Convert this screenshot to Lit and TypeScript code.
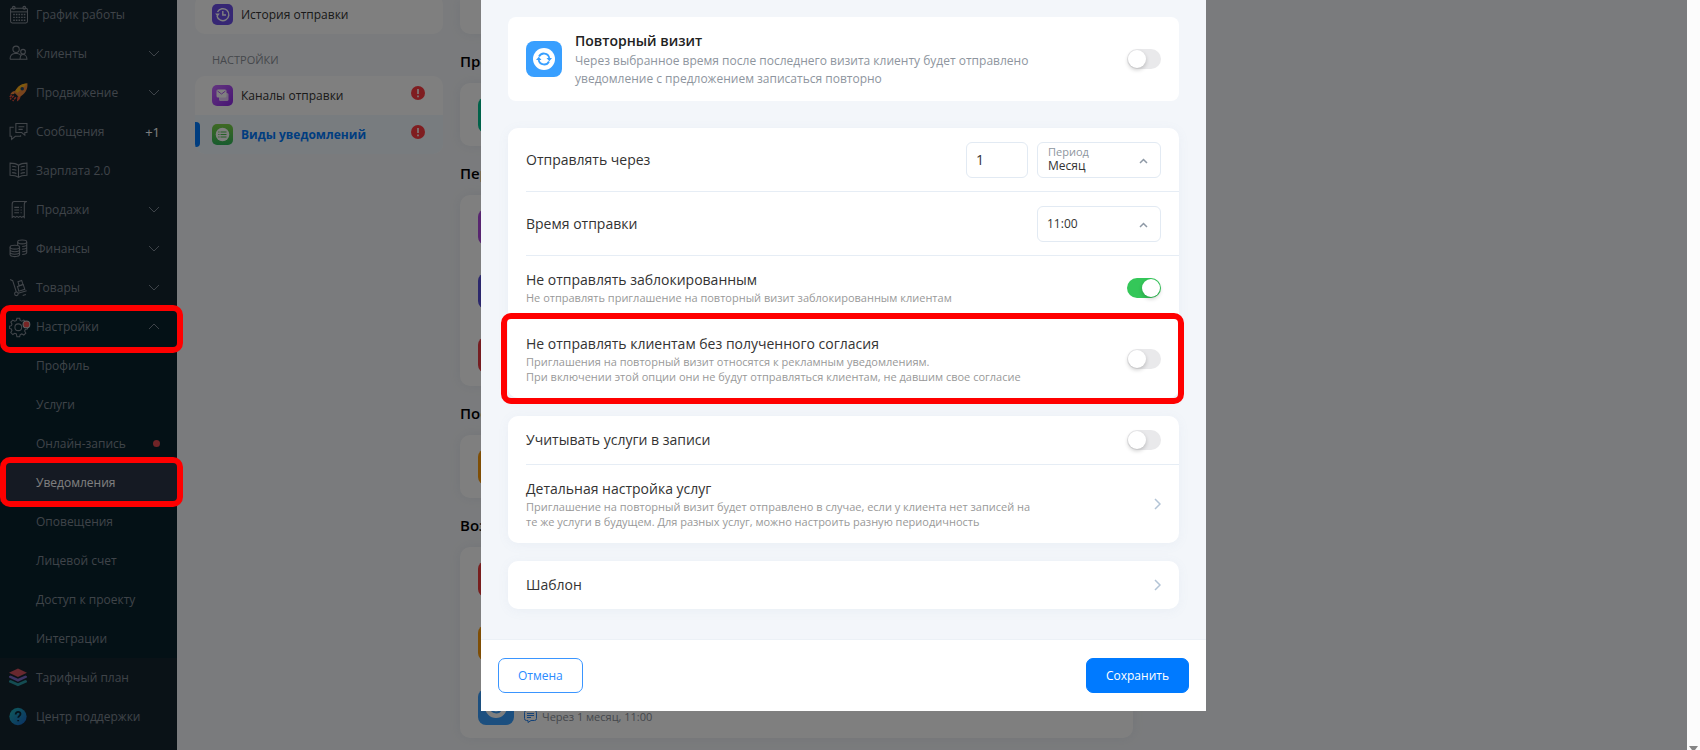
import { LitElement, html, svg, css, nothing } from "lit";
import { customElement, property } from "lit/decorators.js";
import { classMap } from "lit/directives/class-map.js";

interface NavItem {
  label: string;
  icon?: string;
  chevron?: "down" | "up";
  count?: string;
  dot?: boolean;
  sub?: boolean;
  active?: boolean;
  framed?: boolean;
}

const NAV: NavItem[] = [
  { label: "График работы", icon: "calendar" },
  { label: "Клиенты", icon: "clients", chevron: "down" },
  { label: "Продвижение", icon: "rocket", chevron: "down" },
  { label: "Сообщения", icon: "messages", count: "+1" },
  { label: "Зарплата 2.0", icon: "book" },
  { label: "Продажи", icon: "receipt", chevron: "down" },
  { label: "Финансы", icon: "coins", chevron: "down" },
  { label: "Товары", icon: "cart", chevron: "down" },
  { label: "Настройки", icon: "gear", chevron: "up", framed: true },
  { label: "Профиль", sub: true },
  { label: "Услуги", sub: true },
  { label: "Онлайн-запись", sub: true, dot: true },
  { label: "Уведомления", sub: true, active: true, framed: true },
  { label: "Оповещения", sub: true },
  { label: "Лицевой счет", sub: true },
  { label: "Доступ к проекту", sub: true },
  { label: "Интеграции", sub: true },
  { label: "Тарифный план", icon: "layers" },
  { label: "Центр поддержки", icon: "help" },
];

const SECTIONS = [
  { title: "Прочие", colors: ["#00c493"] },
  { title: "Перед визитом", colors: ["#b04be0", "#564fd8", "#ec3b43"] },
  { title: "После визита", colors: ["#ff9d0a"] },
  { title: "Возвращение", colors: ["#f03c3c", "#ff9d0a", "#389fff"] },
];

const ICONS: Record<string, unknown> = {
  calendar: svg`
    <rect x="1.5" y="3" width="16" height="14" rx="1.500"/>
    <path d="M1.500 6.500h16"/>
    <circle cx="4.500" cy="2.600" r="1.300"/><circle cx="14.500" cy="2.600" r="1.300"/>
    <path stroke-width="1.300" stroke-dasharray="1.500 1" d="M4 9h11.500M4 11.700h11.500M4 14.400h11.500"/>`,
  clients: svg`
    <circle cx="6.700" cy="5" r="3"/>
    <path d="M1 14.500c0-3.500 2-5.300 4.500-5.500h2.500c1.500.2 2.500.8 3.200 1.800M1 14.500h9.500"/>
    <circle cx="13.300" cy="7.300" r="2.200"/>
    <path d="M10.500 14.500c0-2.600 1-4.500 2.800-4.500s3.700 1.700 3.700 4.500z"/>`,
  messages: svg`
    <path d="M6.500 1.500h10.500v8.500h-2v2.500L12 10H6.500z"/>
    <path d="M4.500 5H1v8.500h1.500v3L6 13.500h5v-1M9 4.500h5.500M9 7h4"/>`,
  book: svg`
    <path d="M9 4C7 2.500 4 2 1 2v11.500c3 0 6 .5 8 2 2-1.500 5-2 8-2V2c-3 0-6 .5-8 2zM9 4v11.500"/>
    <path d="M3 5c1.500 0 3 .3 4 .8M3 8c1.500 0 3 .3 4 .8M3 11c1.500 0 3 .3 4 .8M15 5c-1.500 0-3 .3-4 .8M15 8c-1.500 0-3 .3-4 .8M15 11c-1.500 0-3 .3-4 .8"/>`,
  receipt: svg`
    <path d="M16.500 1.500H5C3.500 1.500 3 2.500 3 4v12.500l1.500-1 1.500 1 1.500-1 1.500 1 1.500-1 1.500 1 1.500-1 1 1V4c0-1.500.3-2.500 2.500-2.500z"/>
    <path d="M5 7h4.500M5 9.500h4.500M5 12h4.500M11 7h1M11 9.500h1M11 12h1"/>`,
  coins: svg`
    <ellipse cx="12.500" cy="2.800" rx="4.300" ry="1.800"/>
    <path d="M8.200 2.800v3M16.800 2.800v10c0 1-1.800 1.800-4.300 1.800M16.800 5.300c0 1-1.800 1.800-4.300 1.800M16.800 7.800c0 1-1.800 1.800-4.300 1.800M16.800 10.300c0 1-1.800 1.800-4.300 1.800"/>
    <ellipse cx="5.500" cy="7.800" rx="4.500" ry="1.800"/>
    <path d="M1 7.800v7c0 1 2 1.900 4.500 1.900s4.500-.9 4.500-1.900v-7M1 10.200c0 1 2 1.800 4.500 1.800s4.500-.8 4.500-1.800M1 12.600c0 1 2 1.800 4.500 1.800s4.500-.8 4.500-1.800"/>`,
  cart: svg`
    <path d="M1 1.500l2.500 1L7 13.500"/>
    <circle cx="7" cy="15" r="1.700"/>
    <path d="M8.700 14.500l8-2.500M13 16.500l3-.8"/>
    <path d="M8 8l5.500-1.800 1.500 4.500-5.700 1.800z"/>
    <path d="M8.500 3.500l3.500-1.200 1.200 3.800-3.600 1.200z"/>`,
  gear: svg`
    <path d="M7.500 1.200h2.600l.5 2.100 1.500.7 1.900-1.100 1.900 1.900-1.100 1.900.6 1.500 2.100.5v2.600l-2.100.5-.6 1.500 1.100 1.900-1.900 1.900-1.900-1.100-1.500.6-.5 2.100H7.500L7 16.100l-1.500-.6-1.900 1.100-1.900-1.900 1.100-1.900-.6-1.500L.500 10.800V8.700l1.700-.5.600-1.500-1.100-1.900 1.900-1.900L5.500 4 7 3.300z"/>
    <circle cx="8.800" cy="9.700" r="3.200"/>
    <circle cx="16.500" cy="7" r="3.200" fill="#f04a4a" stroke="#c8c8c8"/>`,
  rocket: svg`
    <g stroke="none">
      <path fill="#ff8a3c" d="M6 7.500C3.500 7.500 2 9 1 11l4-.6z"/>
      <path fill="#f0573c" d="M11 12c0 2.500-1.500 4.500-3.500 5.500L8 13z"/>
      <path fill="#f0883a" d="M17.500.5C12 .5 8 3 5 9l4.500 4.500C15.500 10.500 17.800 6 17.500.5z"/>
      <path fill="#ffb41a" d="M17.500.5C12 .5 8.500 3 6 7.500l2 2z"/>
      <circle cx="12.500" cy="5.500" r="1.700" fill="#24466a"/>
    </g>
    <path stroke="#e8503c" stroke-width="1.400" stroke-dasharray="2.500 .8" d="M4.500 12L1 15.500M6.500 13.500L3.500 17M2.500 11.500L.5 13.500"/>`,
  layers: svg`
    <g stroke="none">
      <path fill="#d0505f" d="M8.500.5L17 4.500l-8.500 4L0 4.500z"/>
      <path fill="#7a68c8" d="M0 7.700l1.500-.7 7 3.200 7-3.200 1.500.7v1.400L8.500 13 0 9.100z"/>
      <path fill="#2898a4" d="M0 12l1.500-.7 7 3.200 7-3.200 1.500.7v1.400l-8.500 4-8.500-4z"/>
    </g>`,
  help: svg`
    <defs><linearGradient id="hg" x1="0" y1="0" x2="1" y2="1"><stop offset="0" stop-color="#20b8b8"/><stop offset="1" stop-color="#1660c8"/></linearGradient></defs>
    <circle cx="8.500" cy="9" r="8.200" fill="url(#hg)" stroke="none"/>
    <path stroke="#0b2434" stroke-width="1.700" d="M6.300 7c0-1.500 1-2.300 2.300-2.300s2.300.8 2.300 2c0 1.700-2.200 1.800-2.200 3.600M8.700 12.200v1.300"/>`,
};

const chevronPath = (dir: string) => (dir === "up" ? "M1 6l5-5 5 5" : "M1 1l5 5 5-5");

const refreshGlyph = svg`
  <circle cx="18" cy="18" r="11" fill="#fff"/>
  <path d="M13 15.500a5.500 5.500 0 0 1 10.300 1.500M23 20.500a5.500 5.500 0 0 1-10.300-1.500" fill="none" stroke="#389fff" stroke-width="1.800"/>
  <path d="M20.500 17h5.500l-2.700 3.300zM10 19h5.500l-2.700-3.300z" fill="#389fff"/>`;

@customElement("side-nav")
export class SideNav extends LitElement {
  static styles = css`
    :host { display: block; background: #15242f; }
    .list { list-style: none; margin: -5px 0 0; padding: 0; }
    .item { position: relative; }
    .link {
      display: flex; align-items: center; height: 39px; box-sizing: border-box;
      padding: 0 17px 0 9px; gap: 8px; color: #7f8892; text-decoration: none; font-size: 12px;
    }
    .slot { width: 19px; height: 19px; flex: none; }
    .icon { display: block; width: 19px; height: 19px; overflow: visible; fill: none; stroke: #848c95; stroke-width: 1; }
    .label { flex: 1; white-space: nowrap; }
    .deep { background: #09222d; }
    .active { background: #2a3446; }
    .active .link { color: #fff; }
    .chev { width: 12px; height: 7px; fill: none; stroke: #7d8792; stroke-width: 1; }
    .count { color: #fff; font-size: 13px; }
    .dot { width: 7px; height: 7px; border-radius: 50%; background: #e0484e; }
    .frame {
      position: absolute; inset: -2px -6px -7px 0; z-index: 5; pointer-events: none;
      border: 6px solid #f00; border-radius: 10px;
    }
    .active .frame { top: -6px; bottom: -5px; }
  `;
  render() {
    return html`<nav aria-label="Главное меню"><ul class="list">
      ${NAV.map((n) => html`
        <li class=${classMap({ item: true, deep: !!n.sub || n.chevron === "up", active: !!n.active })}>
          <a class="link" href="#">
            <span class="slot">${n.icon ? html`<svg class="icon" viewBox="0 0 18 18" aria-hidden="true">${ICONS[n.icon]}</svg>` : nothing}</span>
            <span class="label">${n.label}</span>
            ${n.count ? html`<span class="count">${n.count}</span>` : nothing}
            ${n.dot ? html`<span class="dot"></span>` : nothing}
            ${n.chevron ? html`<svg class="chev" viewBox="0 0 12 7" aria-hidden="true"><path d=${chevronPath(n.chevron)}/></svg>` : nothing}
          </a>
          ${n.framed ? html`<div class="frame"></div>` : nothing}
        </li>`)}
    </ul></nav>`;
  }
}

@customElement("settings-menu")
export class SettingsMenu extends LitElement {
  static styles = css`
    :host { display: block; font-size: 12px; color: #333; }
    .card { background: #fff; border-radius: 10px; overflow: hidden; }
    .first { margin-top: -5px; }
    .heading { margin: 0; padding: 10px 17px 0; font-size: 11px; font-weight: 400; line-height: 32px; color: #8a9099; }
    .link {
      position: relative; display: flex; align-items: center; gap: 8px; height: 39px;
      padding: 0 18px 0 17px; color: inherit; text-decoration: none;
    }
    .label { flex: 1; white-space: nowrap; }
    .icon { width: 21px; height: 21px; flex: none; }
    .alert { width: 14px; height: 14px; margin-bottom: 5px; }
    .current { background: #f0f8ff; color: #007aff; font-weight: 700; }
    .current::before {
      content: ""; position: absolute; left: 0; top: 7px; width: 5px; height: 25px;
      background: #007aff; border-radius: 0 4px 4px 0;
    }
  `;
  private alert() {
    return html`<svg class="alert" viewBox="0 0 14 14" role="img" aria-label="Внимание">
      <circle cx="7" cy="7" r="7" fill="#ff3b41"/><path d="M7 3v5M7 9.500v1.700" stroke="#fff" stroke-width="1.600"/></svg>`;
  }
  render() {
    return html`
      <div class="card first">
        <a class="link" href="#">
          <svg class="icon" viewBox="0 0 21 21" aria-hidden="true"><rect width="21" height="21" rx="5" fill="#6c4fe8"/>
            <path d="M5 12a6 6 0 1 0 .5-4M10.800 7v4h3.200" fill="none" stroke="#fff" stroke-width="1.400"/><path d="M3.200 9.500h4.600l-2.300 3.200z" fill="#fff"/></svg>
          <span class="label">История отправки</span>
        </a>
      </div>
      <h2 class="heading">НАСТРОЙКИ</h2>
      <div class="card">
        <a class="link" href="#">
          <svg class="icon" viewBox="0 0 21 21" aria-hidden="true">
            <defs><linearGradient id="pg" x1="0" y1="0" x2="1" y2="1"><stop offset="0" stop-color="#c66bff"/><stop offset="1" stop-color="#8e28e8"/></linearGradient></defs>
            <rect width="21" height="21" rx="5" fill="url(#pg)"/>
            <rect x="7" y="8" width="9.500" height="8" rx="1.500" fill="#fff" opacity=".75"/>
            <rect x="4.500" y="4.500" width="10" height="8" rx="1.500" fill="#fff"/><path d="M5.500 6l4 3 4-3" fill="none" stroke="#b45af5"/></svg>
          <span class="label">Каналы отправки</span>${this.alert()}
        </a>
        <a class="link current" href="#" aria-current="page">
          <svg class="icon" viewBox="0 0 21 21" aria-hidden="true">
            <defs><linearGradient id="gg" x1="0" y1="0" x2="0" y2="1"><stop offset="0" stop-color="#7ed348"/><stop offset="1" stop-color="#30b85c"/></linearGradient></defs>
            <rect width="21" height="21" rx="5" fill="url(#gg)"/><circle cx="10.500" cy="10.500" r="6.800" fill="#fff"/>
            <path d="M8.500 8h6M8.500 10.500h6M8.500 13h6M6.300 8h1.200M6.300 10.500h1.200M6.300 13h1.200" stroke="#4cc050" stroke-width="1.200"/></svg>
          <span class="label">Виды уведомлений</span>${this.alert()}
        </a>
      </div>`;
  }
}

@customElement("notice-list")
export class NoticeList extends LitElement {
  static styles = css`
    :host { display: block; }
    .card { background: #fff; border-radius: 10px; box-shadow: 0 0 12px rgba(120, 140, 170, .12); }
    .top { height: 34px; border-radius: 0 0 10px 10px; }
    .heading { margin: 0; font-size: 15px; font-weight: 600; color: #000; height: 49px; line-height: 54px; }
    .row { height: 63px; display: flex; align-items: center; gap: 10px; padding: 0 18px; }
    .row + .row { border-top: 1px solid #fff; }
    .tile { width: 36px; height: 36px; flex: none; }
    .info { display: flex; align-items: center; gap: 5px; margin-top: 20px; font-size: 11px; color: #8a9099; }
    .note { width: 13px; height: 13px; fill: none; stroke: #2a86f0; }
  `;
  render() {
    return html`<div class="card top"></div>
      ${SECTIONS.map((s, si) => html`
        <h2 class="heading">${s.title}</h2>
        <div class="card">
          ${s.colors.map((c, i) => html`<div class="row">
            <svg class="tile" viewBox="0 0 36 36" aria-hidden="true"><rect width="36" height="36" rx="8" fill=${c}/>${refreshGlyph}</svg>
            ${si === 3 && i === 2 ? html`<div class="info">
              <svg class="note" viewBox="0 0 13 13" aria-hidden="true"><path d="M2.500.5h8a2 2 0 0 1 2 2v6a2 2 0 0 1-2 2H7L4 12.500v-2H2.500a2 2 0 0 1-2-2v-6a2 2 0 0 1 2-2zM3 3.500h7M3 5.500h7M3 7.500h4"/></svg>
              <span>Через 1 месяц, 11:00</span></div>` : nothing}
          </div>`)}
        </div>`)}`;
  }
}

@customElement("toggle-switch")
export class ToggleSwitch extends LitElement {
  @property({ type: Boolean }) on = false;
  @property() name = "";
  static styles = css`
    :host { display: block; flex: none; }
    .box {
      appearance: none; display: block; box-sizing: border-box; margin: 0; width: 34px; height: 20px;
      border-radius: 10px; background: #e9e9eb; padding: 1px; cursor: pointer;
    }
    .box::before {
      content: ""; display: block; width: 18px; height: 18px; border-radius: 50%;
      background: #fff; box-shadow: 0 2px 4px rgba(0, 0, 0, .2);
    }
    .box:checked { background: #34c759; }
    .box:checked::before { margin-left: 14px; }
  `;
  render() {
    return html`<input class="box" type="checkbox" role="switch" aria-label=${this.name} .checked=${this.on}>`;
  }
}

@customElement("visit-dialog")
export class VisitDialog extends LitElement {
  static styles = css`
    :host { display: block; width: 100%; max-width: 725px; color: #333; }
    .dialog { background: #fff; }
    .body { background: #f3f6fa; padding: 17px 27px 30px; display: flex; flex-direction: column; gap: 18px; border-bottom: 1px solid #ecf1f6; }
    .card { background: #fff; border-radius: 10px; box-shadow: 0 2px 12px rgba(110, 140, 180, .07); }
    .intro { display: flex; align-items: center; gap: 13px; padding: 13px 18px; margin-bottom: 9px; border-radius: 8px; box-shadow: none; }
    .tile { width: 36px; height: 36px; flex: none; }
    .grow { flex: 1; min-width: 0; }
    .title { margin: 0; font-size: 14px; line-height: 22px; font-weight: 600; color: #222; }
    .desc { margin: 0; font-size: 12px; line-height: 18px; color: #8e959e; max-width: 480px; }
    .row {
      display: flex; align-items: center; gap: 9px; min-height: 48px;
      margin-left: 18px; padding: 0 18px 0 0; border-bottom: 1px solid #e6edf5; position: relative;
    }
    .row:last-child { border-bottom: 0; }
    .tall { min-height: 63px; }
    .flush { border-bottom-color: #fff; }
    .text { flex: 1; padding: 14px 0; }
    .name { display: block; font-size: 14px; line-height: 20px; }
    .hint { display: block; font-size: 11px; line-height: 15px; color: #999; }
    .link {
      box-sizing: border-box; width: calc(100% - 18px); background: none; border: 0; font: inherit; color: inherit;
      text-align: left; cursor: pointer;
    }
    .field { position: relative; width: 124px; }
    .caption { position: absolute; left: 11px; top: 2px; font-size: 11px; line-height: 15px; color: #8e959e; }
    .input {
      appearance: none; display: block; box-sizing: border-box; height: 36px; width: 62px; margin: 0; padding: 0 9px;
      border: 1px solid #e2eaf3; border-radius: 6px; background: #fff; font: inherit; font-size: 14px; color: #333; outline: 0;
    }
    .select { width: 100%; font-size: 12px; }
    .captioned { padding: 13px 10px 0; line-height: 18px; }
    .arrow { position: absolute; right: 13px; top: 16px; width: 9px; height: 6px; fill: none; stroke: #8e99a6; stroke-width: 1.500; pointer-events: none; }
    .go { width: 7px; height: 12px; flex: none; fill: none; stroke: #b3c4d6; stroke-width: 1.500; }
    .frame { position: absolute; inset: -7px -5px -6px -25px; border: 6px solid #f00; border-radius: 10px; pointer-events: none; z-index: 2; }
    .footer { display: flex; justify-content: space-between; padding: 18px 17px; }
    .btn { height: 35px; padding: 0 19px; border-radius: 7px; border: 1px solid #3a95ff; background: #fff; color: #2a8bff; font: inherit; font-size: 12px; cursor: pointer; }
    .primary { background: #007aff; border-color: #007aff; color: #fff; }
  `;
  private go() {
    return html`<svg class="go" viewBox="0 0 7 12" aria-hidden="true"><path d="M1 1l5 5-5 5"/></svg>`;
  }
  private arrow() {
    return html`<svg class="arrow" viewBox="0 0 9 6" aria-hidden="true"><path d="M1 5l3.500-3.500L8 5"/></svg>`;
  }
  render() {
    return html`<div class="dialog" role="dialog" aria-label="Повторный визит">
      <div class="body">
        <section class="card intro">
          <svg class="tile" viewBox="0 0 36 36" aria-hidden="true"><rect width="36" height="36" rx="8" fill="#389fff"/>${refreshGlyph}</svg>
          <div class="grow">
            <h1 class="title">Повторный визит</h1>
            <p class="desc">Через выбранное время после последнего визита клиенту будет отправлено уведомление с предложением записаться повторно</p>
          </div>
          <toggle-switch name="Повторный визит"></toggle-switch>
        </section>
        <section class="card">
          <div class="row tall">
            <label class="text name" for="amount">Отправлять через</label>
            <input class="input" id="amount" type="text" inputmode="numeric" value="1">
            <div class="field">
              <label class="caption" for="period">Период</label>
              <select class="input select captioned" id="period"><option>Месяц</option><option>Неделя</option></select>
              ${this.arrow()}
            </div>
          </div>
          <div class="row tall">
            <label class="text name" for="time">Время отправки</label>
            <div class="field">
              <select class="input select" id="time"><option>11:00</option><option>12:00</option></select>
              ${this.arrow()}
            </div>
          </div>
          <div class="row tall flush">
            <div class="text"><span class="name">Не отправлять заблокированным</span>
              <span class="hint">Не отправлять приглашение на повторный визит заблокированным клиентам</span></div>
            <toggle-switch on name="Не отправлять заблокированным"></toggle-switch>
          </div>
          <div class="row tall">
            <div class="text"><span class="name">Не отправлять клиентам без полученного согласия</span>
              <span class="hint">Приглашения на повторный визит относятся к рекламным уведомлениям.<br>При включении этой опции они не будут отправляться клиентам, не давшим свое согласие</span></div>
            <toggle-switch name="Не отправлять клиентам без полученного согласия"></toggle-switch>
            <div class="frame"></div>
          </div>
        </section>
        <section class="card">
          <div class="row">
            <span class="text name">Учитывать услуги в записи</span>
            <toggle-switch name="Учитывать услуги в записи"></toggle-switch>
          </div>
          <button class="row link" type="button">
            <span class="text"><span class="name">Детальная настройка услуг</span>
              <span class="hint">Приглашение на повторный визит будет отправлено в случае, если у клиента нет записей на<br>те же услуги в будущем. Для разных услуг, можно настроить разную периодичность</span></span>
            ${this.go()}
          </button>
        </section>
        <section class="card">
          <button class="row link" type="button"><span class="text name">Шаблон</span>${this.go()}</button>
        </section>
      </div>
      <footer class="footer">
        <button class="btn" type="button">Отмена</button>
        <button class="btn primary" type="button">Сохранить</button>
      </footer>
    </div>`;
  }
}

@customElement("app-root")
export class AppRoot extends LitElement {
  static styles = css`
    :host { display: flex; height: 100vh; overflow: hidden; font-family: "Open Sans", "Noto Sans", sans-serif; }
    .app { position: relative; flex: 1; min-width: 0; overflow: hidden; display: grid; grid-template-columns: 177px 1fr; background: #f5f7fa; }
    .main { display: grid; grid-template-columns: 248px minmax(0, 673px); gap: 17px; padding-left: 18px; align-items: start; }
    .overlay { position: absolute; inset: 0; z-index: 1; background: rgba(0, 0, 0, .5); display: flex; justify-content: center; align-items: flex-start; }
    .track { width: 13px; flex: none; background: #fcfcfc; display: flex; align-items: flex-end; justify-content: center; }
    .down { width: 9px; height: 4px; fill: #858585; }
  `;
  render() {
    return html`
      <div class="app">
        <side-nav></side-nav>
        <main class="main">
          <settings-menu></settings-menu>
          <notice-list></notice-list>
        </main>
        <div class="overlay"><visit-dialog></visit-dialog></div>
      </div>
      <div class="track"><svg class="down" viewBox="0 0 9 4" aria-hidden="true"><path d="M0 0h9L6 4H3z"/></svg></div>`;
  }
}
